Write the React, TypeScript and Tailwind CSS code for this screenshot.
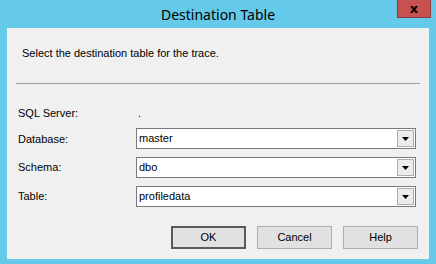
import React from "react";

function Combo({ value }: { value: string }) {
  return (
    <div className="flex h-[21px] w-[280px] items-stretch border border-[#7a7a7a] bg-white">
      <div className="flex flex-1 items-center pl-[2px] text-[11px] leading-none text-black">{value}</div>
      <div className="my-[1px] mr-[1px] flex w-[17px] items-center justify-center border border-[#acacac] bg-[#ececec]">
        <svg width="7" height="4" viewBox="0 0 7 4">
          <path d="M0 0h7L3.5 4z" fill="#000" />
        </svg>
      </div>
    </div>
  );
}

function Btn({ label, primary }: { label: string; primary?: boolean }) {
  return (
    <div
      className={
        "flex h-[23px] w-[75px] items-center justify-center bg-[#e1e1e1] text-[11px] text-black " +
        (primary ? "border-2 border-[#5a5a5a]" : "border border-[#adadad]")
      }
    >
      {label}
    </div>
  );
}

export default function App() {
  return (
    <div
      className="flex h-[264px] w-[436px] flex-col bg-[#65c9ea]"
      style={{ fontFamily: '"Liberation Sans", Arial, sans-serif' }}
    >
      <div className="relative flex h-[28px] items-center justify-center">
        <span
          className="pt-[1px] text-[14px] text-black"
          style={{ fontFamily: '"Noto Sans", "Open Sans", sans-serif' }}
        >
          Destination Table
        </span>
        <div className="absolute right-[5px] top-0 flex h-[18px] w-[34px] items-center justify-center border border-t-0 border-[#8a3c3c] bg-[#c75050]">
          <span className="text-[13px] font-bold leading-none text-black" style={{ fontFamily: '"DejaVu Sans", sans-serif' }}>
            x
          </span>
        </div>
      </div>
      <div className="mx-[7px] flex h-[231px] flex-col bg-[#f0f0f0]">
        <div className="pl-[15px] pt-[19px] text-[11px] leading-[13px] text-black">
          Select the destination table for the trace.
        </div>
        <div className="mx-[9px] mt-[23px] h-[2px] border-t border-[#a0a0a0] border-b-white" />
        <div className="mt-[22px] grid grid-cols-[118px_280px] items-center gap-y-[8px] pl-[11px] text-[11px] text-black">
          <div className="leading-[13px]">SQL Server:</div>
          <div className="pl-[2px] leading-[13px]">.</div>
          <div className="mt-[1px]">Database:</div>
          <Combo value="master" />
          <div>Schema:</div>
          <Combo value="dbo" />
          <div>Table:</div>
          <Combo value="profiledata" />
        </div>
        <div className="mt-[19px] flex justify-end gap-[11px] pr-[11px]">
          <Btn label="OK" primary />
          <Btn label="Cancel" />
          <Btn label="Help" />
        </div>
      </div>
    </div>
  );
}
